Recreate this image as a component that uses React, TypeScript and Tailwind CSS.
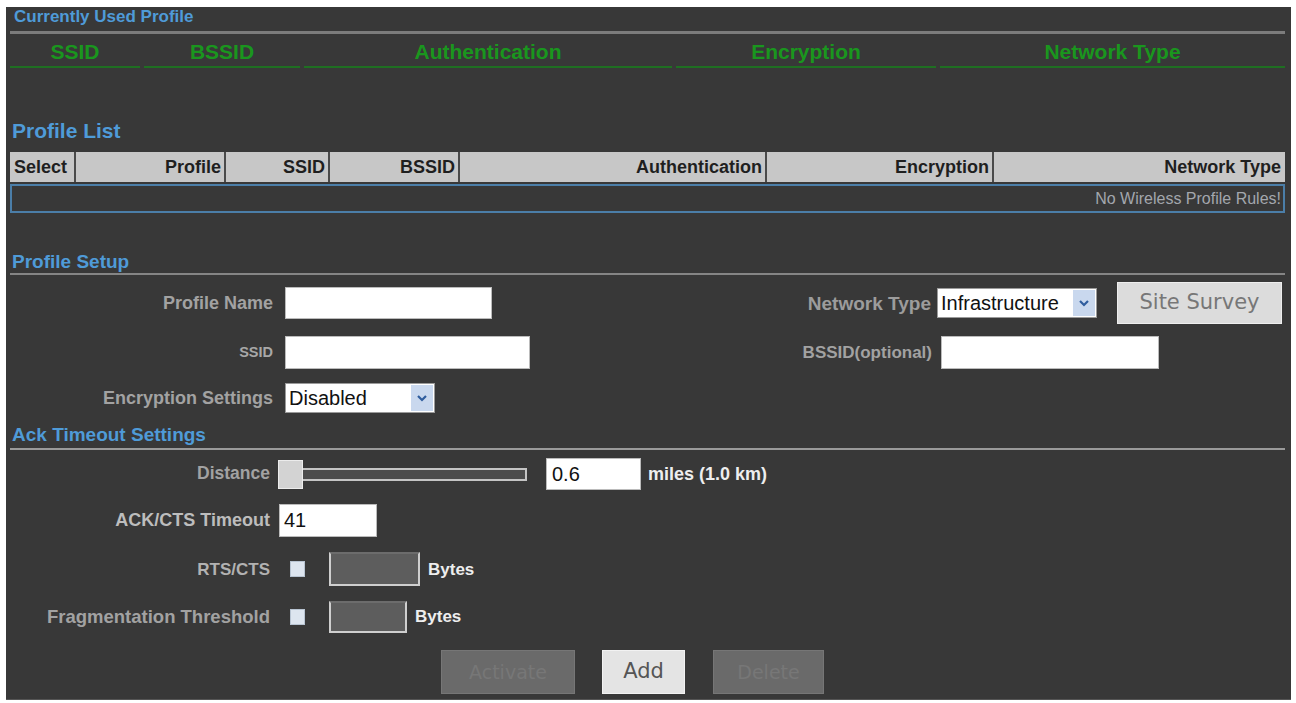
const sans = "font-['Liberation_Sans',Arial,sans-serif]";
const deja = "font-['DejaVu_Sans',Verdana,sans-serif]";

const greenCols = [
  { label: "SSID", w: "w-[130px]" },
  { label: "BSSID", w: "w-[156px]" },
  { label: "Authentication", w: "w-[368px]" },
  { label: "Encryption", w: "w-[260px]" },
  { label: "Network Type", w: "w-[345px]" },
];

const listCols = [
  { label: "Select", w: "w-[66px]" },
  { label: "Profile", w: "w-[150px]" },
  { label: "SSID", w: "w-[104px]" },
  { label: "BSSID", w: "w-[130px]" },
  { label: "Authentication", w: "w-[307px]" },
  { label: "Encryption", w: "w-[227px]" },
  { label: "Network Type", w: "w-[290px]" },
];

function Chevron() {
  return (
    <span className="flex h-full w-[22px] items-center justify-center bg-[#c9d8ee]">
      <svg width="12" height="10" viewBox="0 0 12 10">
        <path d="M2 3 L6 7 L10 3" fill="none" stroke="#2f5d9e" strokeWidth="2.2" />
      </svg>
    </span>
  );
}

function FakeSelect({ value, w }: { value: string; w: string }) {
  return (
    <div className={`flex h-[30px] ${w} items-center justify-between border border-[#9a9a9a] bg-white pl-[3px] pr-[1px] py-[1px]`}>
      <span className="text-[20px] leading-none text-[#111]">{value}</span>
      <Chevron />
    </div>
  );
}

function Label({ text, cls }: { text: string; cls: string }) {
  return <span className={`text-right font-bold leading-none ${cls}`}>{text}</span>;
}

function Heading({ text, size, h }: { text: string; size: string; h: string }) {
  return <div className={`flex ${h} items-center ${size} font-bold text-[#4f9bd8]`}>{text}</div>;
}

export default function App() {
  return (
    <div className={`h-[703px] w-[1296px] bg-white pt-[7px] pl-[6px] pr-[5px] pb-[3px] ${sans}`}>
      <div className="h-full border-b border-[#555] bg-[#383838] pl-[4px] pr-[6px]">
        {/* Currently used profile */}
        <div className="h-[27px] border-b-[3px] border-[#7c7c7c]">
          <div className="pl-[4px] text-[17px] font-bold leading-[20px] text-[#4f9bd8]">Currently Used Profile</div>
        </div>
        <div className="flex h-[34px] gap-[4px]">
          {greenCols.map((c) => (
            <div
              key={c.label}
              className={`${c.w} flex items-center justify-center border-b-2 border-[#1f6f22] pt-[3px] text-[21px] font-bold text-[#1a961e]`}
            >
              {c.label}
            </div>
          ))}
        </div>

        {/* Profile list */}
        <div className="mt-[52px] pl-[2px]">
          <Heading text="Profile List" size="text-[21px]" h="h-[22px]" />
        </div>
        <div className="mt-[10px] flex h-[30px] bg-[#c7c7c7]">
          {listCols.map((c, i) => (
            <div
              key={c.label}
              className={`${c.w} flex items-center justify-end pr-[3px] text-[18px] font-bold text-[#1f1f1f] ${
                i < listCols.length - 1 ? "border-r-2 border-[#4a4a4a]" : ""
              } ${i === 0 ? "justify-start pl-[4px]" : ""}`}
            >
              {c.label}
            </div>
          ))}
        </div>
        <div className="mt-[2px] flex h-[29px] w-[1275px] items-center justify-end border-2 border-[#4b7ea8] pr-[2px] text-[16px] text-[#a3a7ad]">
          No Wireless Profile Rules!
        </div>

        {/* Profile setup */}
        <div className="mt-[38px] border-b-2 border-[#858585] pl-[2px]">
          <Heading text="Profile Setup" size="text-[19px]" h="h-[22px]" />
        </div>

        <div className="flex h-[56px] items-center">
          <div className="flex w-[690px] items-center">
            <Label text="Profile Name" cls="w-[263px] text-[18px] text-[#a2a2a2]" />
            <div className="ml-[12px] h-[32px] w-[207px] border border-[#bbb] bg-white" />
          </div>
          <Label text="Network Type" cls="w-[231px] text-[19px] text-[#9c9c9c]" />
          <div className="ml-[6px]">
            <FakeSelect value="Infrastructure" w="w-[160px]" />
          </div>
          <button
            className={`ml-[20px] h-[42px] w-[165px] border border-[#eee] bg-[#dcdcdc] text-[21px] text-[#777] ${deja}`}
          >
            Site Survey
          </button>
        </div>
        <div className="flex h-[42px] items-center">
          <div className="flex w-[690px] items-center">
            <Label text="SSID" cls="w-[263px] text-[14.5px] text-[#a8a8a8]" />
            <div className="ml-[12px] h-[33px] w-[245px] border border-[#bbb] bg-white" />
          </div>
          <Label text="BSSID(optional)" cls="w-[232px] text-[17px] text-[#a2a2a2]" />
          <div className="ml-[9px] h-[33px] w-[218px] border border-[#bbb] bg-white" />
        </div>
        <div className="flex h-[50px] items-center">
          <Label text="Encryption Settings" cls="w-[263px] text-[18px] text-[#a2a2a2]" />
          <div className="ml-[12px]">
            <FakeSelect value="Disabled" w="w-[150px]" />
          </div>
        </div>

        {/* Ack timeout */}
        <div className="border-b-2 border-[#9a9a9a] pl-[2px]">
          <Heading text="Ack Timeout Settings" size="text-[19px]" h="h-[25px]" />
        </div>

        <div className="flex h-[48px] items-center">
          <Label text="Distance" cls="w-[260px] text-[17.5px] text-[#a2a2a2]" />
          <div className="ml-[8px] flex items-center">
            <div className="h-[29px] w-[25px] border border-[#ececec] bg-[#d3d3d3]" />
            <div className="h-[13px] w-[224px] border-2 border-l-0 border-[#c4c4c4] bg-[#4c4c4c]" />
          </div>
          <div className="ml-[19px] flex h-[32px] w-[95px] items-center border border-[#bbb] bg-white pl-[5px] text-[20px] text-[#111]">
            0.6
          </div>
          <span className="ml-[7px] text-[18px] font-bold text-[#eeeeee]">miles (1.0 km)</span>
        </div>
        <div className="flex h-[44px] items-center">
          <Label text="ACK/CTS Timeout" cls="w-[260px] text-[18px] text-[#bdbdbd]" />
          <div className="ml-[9px] flex h-[33px] w-[98px] items-center border border-[#bbb] bg-white pl-[4px] text-[20px] text-[#111]">
            41
          </div>
        </div>
        <div className="flex h-[54px] items-center">
          <Label text="RTS/CTS" cls="w-[260px] text-[17px] text-[#b2b2b2]" />
          <div className="ml-[20px] h-[16px] w-[15px] border border-[#b8c4d2] bg-[#dde5ef]" />
          <div className="ml-[24px] h-[34px] w-[91px] border-2 border-[#cfcfcf] border-t-[#6c6c6c] bg-[#5d5d5d]" />
          <span className="ml-[8px] mt-[2px] text-[17px] font-bold text-[#eeeeee]">Bytes</span>
        </div>
        <div className="flex h-[42px] items-center">
          <Label text="Fragmentation Threshold" cls="w-[260px] text-[18.5px] text-[#a2a2a2]" />
          <div className="ml-[20px] h-[16px] w-[15px] border border-[#b8c4d2] bg-[#dde5ef]" />
          <div className="ml-[24px] h-[32px] w-[78px] border-2 border-[#cfcfcf] border-t-[#6c6c6c] bg-[#5d5d5d]" />
          <span className="ml-[8px] text-[17px] font-bold text-[#eeeeee]">Bytes</span>
        </div>

        <div className={`mt-[12px] flex h-[44px] ${deja}`}>
          <button className="ml-[431px] h-[44px] w-[134px] border border-[#767676] bg-[#6a6a6a] text-[19px] text-[#777]">
            Activate
          </button>
          <button className="ml-[27px] h-[44px] w-[83px] border border-[#f2f2f2] bg-[#e4e4e4] text-[21px] text-[#555]">
            Add
          </button>
          <button className="ml-[28px] h-[44px] w-[111px] border border-[#767676] bg-[#6a6a6a] text-[19px] text-[#777]">
            Delete
          </button>
        </div>
      </div>
    </div>
  );
}
